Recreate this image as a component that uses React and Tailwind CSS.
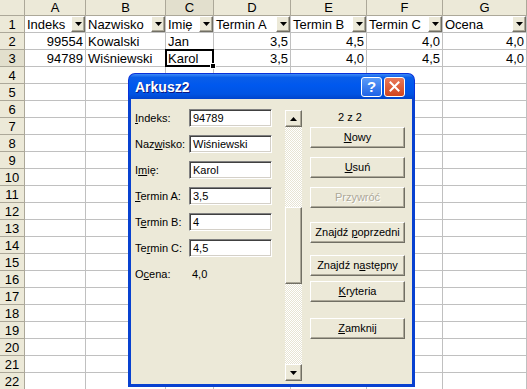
import React from 'react';

const colWidths = ['w-[61px]', 'w-[80px]', 'w-[48px]', 'w-[77px]', 'w-[76px]', 'w-[76px]', 'w-[84px]'];
const letters = ['A', 'B', 'C', 'D', 'E', 'F', 'G'];
const headers = ['Indeks', 'Nazwisko', 'Imię', 'Termin A', 'Termin B', 'Termin C', 'Ocena'];
const numeric = [true, false, false, true, true, true, true];
const data = [
	['99554', 'Kowalski', 'Jan', '3,5', '4,5', '4,0', '4,0'],
	['94789', 'Wiśniewski', 'Karol', '3,5', '4,0', '4,5', '4,0'],
];

const raised =
	'border border-t-white border-l-white border-r-[#716f64] border-b-[#716f64] shadow-[inset_-1px_-1px_0_#aca899] bg-[#ece9d8]';

function DownTri({ className = '' }) {
	return (
		<svg width="7" height="4" viewBox="0 0 7 4" className={className}>
			<path d="M0 0h7L3.5 4z" fill="#000" />
		</svg>
	);
}

function FilterButton() {
	return (
		<div className={`w-[14px] self-stretch flex items-center justify-center ${raised}`}>
			<DownTri />
		</div>
	);
}

function Sheet() {
	const rows = [];
	for (let r = 1; r <= 22; r++) rows.push(r);

	return (
		<div className="flex flex-col text-[13px] leading-none text-black">
			<div className="flex h-[16px]">
				<div className="w-[25px] h-[16px] bg-[#ece9d8] border-r border-b border-[#aca899]" />
				{letters.map((l, i) => (
					<div
						key={l}
						className={`${colWidths[i]} h-[16px] flex items-center justify-center border-r border-b border-[#aca899] ${
							l === 'C' ? 'bg-[#e2dfcd]' : 'bg-[#ece9d8]'
						}`}>
						{l}
					</div>
				))}
			</div>
			{rows.map((r) => (
				<div key={r} className="flex h-[17px] shrink-0">
					<div
						className={`w-[25px] h-[17px] flex items-center justify-center border-r border-b border-[#aca899] ${
							r === 3 ? 'bg-[#e2dfcd]' : 'bg-[#ece9d8]'
						}`}>
						{r}
					</div>
					{letters.map((l, i) => {
						let content = null;
						if (r === 1) {
							content = (
								<>
									<span className="flex-1 pl-[2px] truncate">{headers[i]}</span>
									<FilterButton />
								</>
							);
						} else if (r === 2 || r === 3) {
							content = (
								<span className={`flex-1 px-[2px] truncate ${numeric[i] ? 'text-right' : 'text-left'}`}>
									{data[r - 2][i]}
								</span>
							);
						}
						const selected = r === 3 && l === 'C';
						return (
							<div
								key={l}
								className={`${colWidths[i]} h-[17px] flex items-center border-r border-b border-[#c0c0c0] ${
									selected ? 'relative' : ''
								}`}>
								{content}
								{selected && (
									<>
										<div className="absolute -left-[1px] -top-[1px] -right-[1px] -bottom-[1px] border-2 border-black" />
										<div className="absolute -right-[3px] -bottom-[3px] w-[6px] h-[6px] bg-black border border-white" />
									</>
								)}
							</div>
						);
					})}
				</div>
			))}
		</div>
	);
}

function Field({ label, value }) {
	return (
		<div className="flex items-center h-[18px]">
			<div className="w-[54px]">{label}</div>
			<div className="w-[83px] h-[18px] bg-white flex items-center pl-[3px] border border-t-[#808080] border-l-[#808080] border-b-white border-r-white shadow-[inset_1px_1px_0_#404040,inset_-1px_-1px_0_#d4d0c8]">
				{value}
			</div>
		</div>
	);
}

function Btn({ children, disabled, className = '' }) {
	return (
		<div
			className={`w-[95px] h-[21px] flex items-center justify-center ${raised} ${
				disabled ? 'text-[#aca899] [text-shadow:1px_1px_0_#fff]' : 'text-black'
			} ${className}`}>
			<span>{children}</span>
		</div>
	);
}

const checker =
	'bg-[repeating-conic-gradient(#ffffff_0%_25%,#e7e4d4_0%_50%)] bg-[length:2px_2px]';

function Dialog() {
	return (
		<div className="absolute left-[128px] top-[73px] w-[287px] h-[314px] flex flex-col text-[11px] leading-none text-black">
			<div className="h-[26px] rounded-t-[7px] flex items-center pl-[6px] pr-[9px] bg-[linear-gradient(to_bottom,#3d8af7_0%,#0a5ee8_14%,#0058ee_45%,#0054e3_80%,#0044cc_100%)] border border-b-0 border-[#0831d9]">
				<span className="flex-1 text-white font-bold text-[14px] [text-shadow:1px_1px_0_#0a1883]">Arkusz2</span>
				<div className="w-[21px] h-[20px] rounded-[3px] border border-white bg-[linear-gradient(to_bottom,#5b9bf8,#1f63e6)] flex items-center justify-center text-white font-bold text-[15px] mr-[2px]">
					?
				</div>
				<div className="w-[21px] h-[20px] rounded-[3px] border border-white bg-[linear-gradient(to_bottom,#e9795a,#d2451c)] flex items-center justify-center">
					<svg width="11" height="11" viewBox="0 0 11 11">
						<path d="M1.5 1.5l8 8M9.5 1.5l-8 8" stroke="#fff" strokeWidth="2" strokeLinecap="square" />
					</svg>
				</div>
			</div>
			<div className="flex-1 bg-[#ece9d8] border-l-[3px] border-r-[3px] border-b-[3px] border-[#0841d0] flex pt-[10px] pl-[4px]">
				<div className="flex flex-col gap-[8px] w-[137px]">
					<Field label={<><u>I</u>ndeks:</>} value="94789" />
					<Field label={<>Naz<u>w</u>isko:</>} value="Wiśniewski" />
					<Field label={<>I<u>m</u>ię:</>} value="Karol" />
					<Field label={<><u>T</u>ermin A:</>} value="3,5" />
					<Field label={<>T<u>e</u>rmin B:</>} value="4" />
					<Field label={<>Te<u>r</u>min C:</>} value="4,5" />
					<div className="flex items-center h-[18px]">
						<div className="w-[57px]">O<u>c</u>ena:</div>
						<div>4,0</div>
					</div>
				</div>
				<div className="ml-[13px] mt-[1px] w-[17px] h-[271px] flex flex-col">
					<div className={`h-[17px] flex items-center justify-center ${raised}`}>
						<DownTri className="rotate-180" />
					</div>
					<div className={`h-[80px] ${checker}`} />
					<div className={`h-[77px] ${raised}`} />
					<div className={`flex-1 ${checker}`} />
					<div className={`h-[17px] flex items-center justify-center ${raised}`}>
						<DownTri />
					</div>
				</div>
				<div className="ml-[8px] flex flex-col">
					<div className="h-[17px] pl-[28px] flex items-center">2 z 2</div>
					<Btn className="mt-[1px]">
						<u>N</u>owy
					</Btn>
					<Btn className="mt-[9px]">
						<u>U</u>suń
					</Btn>
					<Btn className="mt-[9px]" disabled>
						Przywróć
					</Btn>
					<Btn className="mt-[14px]">
						Znajdź <u>p</u>oprzedni
					</Btn>
					<Btn className="mt-[12px]">
						Znajdź n<u>a</u>stępny
					</Btn>
					<Btn className="mt-[5px]">
						<u>K</u>ryteria
					</Btn>
					<Btn className="mt-[16px]">
						<u>Z</u>amknij
					</Btn>
				</div>
			</div>
		</div>
	);
}

export default function App() {
	return (
		<div className="relative w-[527px] h-[389px] overflow-hidden bg-white font-['Liberation_Sans',Arial,sans-serif]">
			<Sheet />
			<Dialog />
		</div>
	);
}
